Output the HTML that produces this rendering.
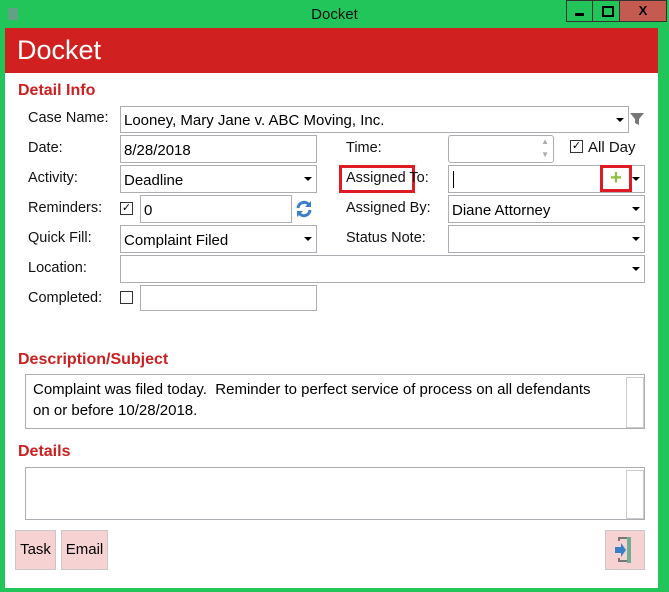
<!DOCTYPE html><html><head><style>
body{margin:0;width:669px;height:592px;overflow:hidden;font-family:"Liberation Sans",sans-serif;background:#fff;position:relative}
.a{position:absolute}
.lbl{position:absolute;font-size:14.5px;color:#111}
.box{position:absolute;border:1px solid #abadb3;background:#fff;box-sizing:border-box;font-size:15px;padding:3px 3px;color:#000}
.dd::after{content:"";position:absolute;right:4px;top:50%;margin-top:-2px;border-left:4px solid transparent;border-right:4px solid transparent;border-top:4px solid #000}
.h{position:absolute;color:#cc2020;font-weight:bold;font-size:16px}
.cb{position:absolute;width:11px;height:11px;border:1px solid #333;background:#fff;font-size:11px;line-height:11px;text-align:center}
.btn{position:absolute;background:#f6d2d2;border:1px solid #c8c8c8;box-sizing:border-box;font-size:15px;text-align:center}
</style></head><body>
<div class="a" style="left:0;top:0;width:669px;height:592px;background:#22c55a"></div>
<div class="a" style="left:5px;top:28px;width:653px;height:560px;background:#fff"></div>
<div class="a" style="left:0;top:0;width:669px;height:28px;text-align:center;font-size:15px;line-height:30px;color:#111">Docket</div>
<div class="a" style="left:8px;top:8px;width:10px;height:12px;background:#8a8aa0;opacity:.6"></div>
<div class="a" style="left:566px;top:0;width:27px;height:22px;border:1px solid #333;box-sizing:border-box"><div class="a" style="left:8px;top:12px;width:9px;height:3px;background:#000"></div></div>
<div class="a" style="left:592px;top:0;width:28px;height:22px;border:1px solid #333;box-sizing:border-box"><div class="a" style="left:9px;top:5px;width:8px;height:7px;border:2px solid #000"></div></div>
<div class="a" style="left:619px;top:0;width:48px;height:22px;background:#c45a50;border:1px solid #333;box-sizing:border-box;text-align:center;font-weight:bold;font-size:13px;line-height:20px">X</div>
<div class="a" style="left:5px;top:28px;width:653px;height:45px;background:#d02020;color:#fff;font-size:27px;line-height:45px;padding-left:12px;box-sizing:border-box">Docket</div>
<div class="h" style="left:18px;top:82px">Detail Info</div>
<div class="lbl" style="left:28px;top:110px">Case Name:</div>
<div class="box dd" style="left:120px;top:106px;width:509px;height:27px;padding-top:5px">Looney, Mary Jane v. ABC Moving, Inc.</div>
<svg class="a" style="left:630px;top:112px" width="14" height="14"><path d="M0 1H14L9 7V13L5 11V7Z" fill="#777"/></svg>
<div class="lbl" style="left:28px;top:140px">Date:</div>
<div class="box" style="left:120px;top:135px;width:197px;height:28px;padding-top:6px">8/28/2018</div>
<div class="lbl" style="left:346px;top:140px">Time:</div>
<div class="box" style="left:448px;top:135px;width:106px;height:28px;border-radius:3px"><span class="a" style="right:4px;top:1px;font-size:8px;color:#aaa">▲</span><span class="a" style="right:4px;top:14px;font-size:8px;color:#aaa">▼</span></div>
<div class="cb" style="left:570px;top:140px">✓</div>
<div class="lbl" style="left:588px;top:139px;font-size:15px">All Day</div>
<div class="lbl" style="left:28px;top:170px">Activity:</div>
<div class="box dd" style="left:120px;top:165px;width:197px;height:28px;padding-top:6px">Deadline</div>
<div class="a" style="left:339px;top:165px;width:76px;height:28px;border:3px solid #e01a22;box-sizing:border-box"></div>
<div class="lbl" style="left:346px;top:170px">Assigned To:</div>
<div class="box dd" style="left:448px;top:165px;width:197px;height:28px"><div class="a" style="left:4px;top:5px;width:1px;height:17px;background:#000"></div></div>
<div class="a" style="left:600px;top:165px;width:32px;height:27px;border:3px solid #e01a22;box-sizing:border-box;color:#8cbf3f;font-weight:bold;font-size:20px;text-align:center;line-height:20px">+</div>
<div class="lbl" style="left:28px;top:200px">Reminders:</div>
<div class="cb" style="left:120px;top:202px">✓</div>
<div class="box" style="left:140px;top:195px;width:152px;height:28px;padding-top:6px">0</div>
<svg class="a" style="left:294px;top:199px" width="20" height="20" viewBox="0 0 20 20"><path d="M15 6A6 6 0 0 0 4 9M5 14A6 6 0 0 0 16 11" stroke="#3a7fc8" stroke-width="3" fill="none"/><path d="M17 2V8H11Z M3 18V12H9Z" fill="#3a7fc8"/></svg>
<div class="lbl" style="left:346px;top:200px">Assigned By:</div>
<div class="box dd" style="left:448px;top:195px;width:197px;height:28px;padding-top:6px">Diane Attorney</div>
<div class="lbl" style="left:28px;top:230px">Quick Fill:</div>
<div class="box dd" style="left:120px;top:225px;width:197px;height:28px;padding-top:6px">Complaint Filed</div>
<div class="lbl" style="left:346px;top:230px">Status Note:</div>
<div class="box dd" style="left:448px;top:225px;width:197px;height:28px"></div>
<div class="lbl" style="left:28px;top:260px">Location:</div>
<div class="box dd" style="left:120px;top:255px;width:525px;height:28px"></div>
<div class="lbl" style="left:28px;top:290px">Completed:</div>
<div class="cb" style="left:120px;top:291px"></div>
<div class="box" style="left:140px;top:285px;width:177px;height:26px"></div>
<div class="h" style="left:18px;top:351px">Description/Subject</div>
<div class="box" style="left:25px;top:374px;width:620px;height:55px;padding:4px 40px 0 7px;line-height:21px">Complaint was filed today.&nbsp; Reminder to perfect service of process on all defendants on or before 10/28/2018.</div>
<div class="a" style="left:626px;top:377px;width:16px;height:49px;border:1px solid #ccc"></div>
<div class="h" style="left:18px;top:443px">Details</div>
<div class="box" style="left:25px;top:467px;width:620px;height:53px"></div>
<div class="a" style="left:626px;top:470px;width:16px;height:47px;border:1px solid #ccc"></div>
<div class="btn" style="left:15px;top:530px;width:41px;height:40px;line-height:38px">Task</div>
<div class="btn" style="left:61px;top:530px;width:47px;height:40px;line-height:38px">Email</div>
<div class="btn" style="left:605px;top:530px;width:40px;height:40px"><svg width="38" height="38"><path d="M13 10V7h8M13 27v3h8" stroke="#777" stroke-width="2" fill="none"/><rect x="21" y="6" width="4" height="26" fill="#6fae90"/><path d="M9 16h6v-4l5 7-5 7v-4H9z" fill="#3a7fc8"/></svg></div>
</body></html>
